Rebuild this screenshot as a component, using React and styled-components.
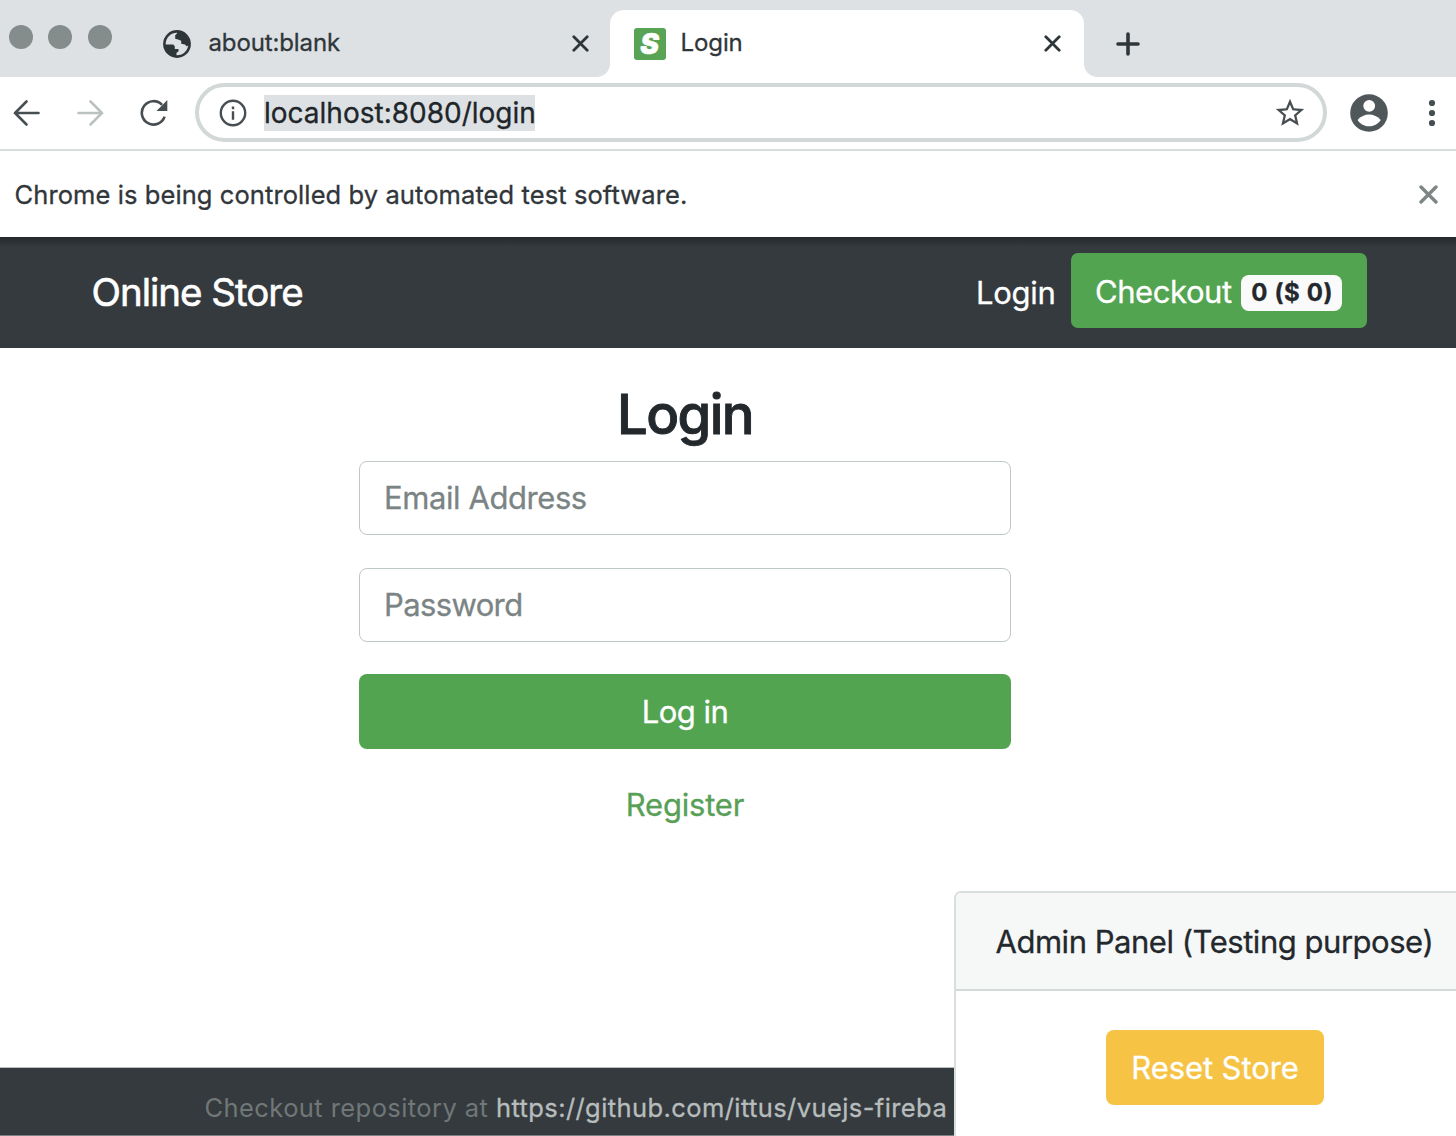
import React from "react";
import styled, { createGlobalStyle } from "styled-components";
import { MdStarBorder } from "react-icons/md";

const GlobalStyle = createGlobalStyle`
  *, *::before, *::after { box-sizing: border-box; }
  body {
    margin: 0;
    background: #fff;
    color: #23282d;
    font-family: Inter, "Liberation Sans", sans-serif;
    -webkit-text-stroke: 0.3px currentColor;
    overflow: hidden;
  }
`;

const Window = styled.div`
  position: relative;
  display: flex;
  flex-direction: column;
  width: 1456px;
  height: 1136px;
  overflow: hidden;
  background: #fff;
`;

const Icon = styled.svg`
  display: block;
  flex: none;
  fill: none;
  stroke: currentColor;
  stroke-width: ${(p) => p.$weight || 2.6};
  stroke-linecap: ${(p) => p.$cap || "butt"};
`;

/* Browser tab strip */

const TabStrip = styled.header`
  display: flex;
  align-items: flex-end;
  height: 77px;
  background: #dde1e3;
  color: #2f363a;
`;

const TrafficLights = styled.div`
  display: flex;
  gap: 15.5px;
  align-self: flex-start;
  padding: 25px 0 0 8.5px;
  width: 136px;
`;

const Light = styled.span`
  width: 24px;
  height: 24px;
  border-radius: 50%;
  background: #848c8c;
`;

const Tab = styled.div`
  position: relative;
  display: flex;
  align-items: center;
  width: 474px;
  height: 67px;
  padding: 0 ${(p) => (p.$active ? 23 : 21)}px 0 ${(p) => (p.$active ? 23.5 : 27)}px;
  border-radius: 14px 14px 0 0;
  background: ${(p) => (p.$active ? "#fff" : "transparent")};

  &::before, &::after {
    content: "";
    display: ${(p) => (p.$active ? "block" : "none")};
    position: absolute;
    bottom: 0;
    width: 13px;
    height: 13px;
  }
  &::before {
    left: -13px;
    background: radial-gradient(circle at 0 0, transparent 12.5px, #fff 13.2px);
  }
  &::after {
    right: -13px;
    background: radial-gradient(circle at 100% 0, transparent 12.5px, #fff 13.2px);
  }
`;

const TabTitle = styled.span`
  flex: 1;
  margin: 0 0 1px ${(p) => p.$gap}px;
  font-size: 24px;
  line-height: 30px;
  letter-spacing: ${(p) => p.$tracking}px;
`;

const Favicon = styled.span`
  display: flex;
  align-items: center;
  justify-content: center;
  width: 32px;
  height: 32px;
  border-radius: 3px;
  background: #58a354;
  color: #fff;
  font-size: 28px;
  font-weight: 900;
  font-style: italic;
  line-height: 32px;
  -webkit-text-stroke: 0.6px #fff;
`;

const NewTab = styled.div`
  display: flex;
  align-items: center;
  height: 67px;
  padding-left: 32px;
`;

/* Toolbar */

const Toolbar = styled.div`
  display: flex;
  align-items: center;
  height: 74px;
  padding: 0 0 1px 12px;
  border-bottom: 2px solid #d9dddd;
  color: #474e52;
`;

const NavIcons = styled.div`
  display: flex;
  gap: 36px;
  width: 183px;
`;

const Omnibox = styled.div`
  display: flex;
  align-items: center;
  width: 1132px;
  height: 59px;
  padding: 0 16px 0 20px;
  border: 4px solid #d2d7d7;
  border-radius: 30px;
`;

const Selection = styled.span`
  height: 36px;
  margin: 0 auto 0 17px;
  width: 271px;
  background: #dde1e3;
  color: #202529;
  font-size: 28px;
  line-height: 36px;
  white-space: nowrap;
`;

const ToolbarEnd = styled.div`
  display: flex;
  align-items: center;
  gap: 40px;
  padding-left: 23px;
`;

const InfoBar = styled.div`
  display: flex;
  align-items: center;
  justify-content: space-between;
  height: 86px;
  padding: 0 18px 0 14.5px;
  color: #7d8585;
`;

const InfoText = styled.span`
  color: #30363a;
  font-size: 25.5px;
  letter-spacing: 0.09px;
`;

/* Store page */

const NavBar = styled.nav`
  display: flex;
  align-items: center;
  height: 111px;
  padding: 0 89px 0 91.5px;
  background: linear-gradient(#23282d 0, #2a3034 4px, #353a3e 10px);
  color: #fff;
`;

const Brand = styled.a`
  margin: 0 auto 1px 0;
  font-size: 38.5px;
  letter-spacing: -1px;
  -webkit-text-stroke-width: 0.6px;
`;

const NavLink = styled.a`
  margin-right: 15px;
  font-size: 31px;
  letter-spacing: -0.3px;
`;

const CheckoutButton = styled.button`
  display: flex;
  align-items: center;
  width: 296.5px;
  height: 75px;
  margin-bottom: 4px;
  padding: 1px 0 0 24.5px;
  border: 0;
  border-radius: 7px;
  background: #53a451;
  color: #fff;
  font: 400 31px Inter, sans-serif;
  letter-spacing: -0.43px;
`;

const Badge = styled.span`
  height: 36px;
  width: 101px;
  margin: 3px 0 0 9px;
  padding-left: 2px;
  border-radius: 8px;
  background: #fafafa;
  color: #23282d;
  font-size: 24px;
  font-weight: 700;
  line-height: 36px;
  letter-spacing: 0.6px;
  text-align: center;
`;

const Main = styled.main`
  flex: none;
  height: 719px;
  padding: 33px 0 0 359px;
`;

const LoginForm = styled.div`
  display: flex;
  flex-direction: column;
  width: 652px;
  text-align: center;
`;

const Heading = styled.h3`
  margin: 0 0 14px;
  font-size: 54.5px;
  font-weight: 500;
  line-height: 66px;
  letter-spacing: -1.6px;
  -webkit-text-stroke-width: 0.9px;
`;

const Field = styled.input`
  width: 100%;
  height: 74px;
  margin-bottom: ${(p) => p.$gap}px;
  padding: 0 24px 1px 24px;
  border: 1.5px solid #c0c7c7;
  border-radius: 8px;
  outline: 0;
  background: #fff;
  font: 400 31px Inter, sans-serif;
  letter-spacing: ${(p) => p.$tracking}px;

  &::placeholder {
    color: #7b8484;
    opacity: 1;
    -webkit-text-stroke: 0.3px #7b8484;
  }
`;

const SubmitButton = styled.button`
  height: 75px;
  border: 0;
  border-radius: 8px;
  background: #53a451;
  color: #fff;
  font: 400 31px Inter, sans-serif;
  letter-spacing: -0.5px;
`;

const RegisterLink = styled.a`
  margin-top: 36px;
  color: #58a056;
  font-size: 31px;
  line-height: 40px;
  letter-spacing: -0.2px;
`;

const Footer = styled.footer`
  display: flex;
  align-items: center;
  height: 69px;
  padding: 12px 0 0 204.5px;
  border-top: 1px solid #b9bebe;
  border-bottom: 1px solid #7b8082;
  background: #353a3e;
  color: #707777;
  font-size: 25.5px;
  letter-spacing: 0.42px;
  white-space: pre;
  -webkit-text-stroke-width: 0;
`;

const RepoLink = styled.a`
  color: #b7bdbd;
  letter-spacing: 0.41px;
  -webkit-text-stroke: 0.3px #b7bdbd;
`;

/* The panel floats over the page and footer */
const AdminPanel = styled.aside`
  position: absolute;
  top: 891px;
  left: 954px;
  width: 504px;
  height: 247px;
  border: 2px solid #d9dede;
  border-radius: 7px 0 0 0;
  background: #fff;
`;

const PanelHeader = styled.div`
  height: 98px;
  padding-left: 39.5px;
  border-bottom: 2px solid #d4d9d9;
  border-radius: 5px 0 0 0;
  background: #f6f7f7;
  font-size: 31px;
  line-height: 98px;
  letter-spacing: -0.47px;
  white-space: nowrap;
`;

const PanelBody = styled.div`
  padding: 39px 0 0 150px;
`;

const ResetButton = styled.button`
  width: 218px;
  height: 75px;
  padding: 0;
  border: 0;
  border-radius: 8px;
  background: #f6c344;
  color: #fff;
  font: 400 31px Inter, sans-serif;
  letter-spacing: -0.1px;
`;

const Cross = ({ size = 17, weight = 2.8 }) => (
  <Icon width={size} height={size} viewBox="0 0 17 17" $weight={weight} $cap="round">
    <path d="M1.8 1.8L15.2 15.2M15.2 1.8L1.8 15.2" />
  </Icon>
);

const Globe = () => (
  <Icon width="28" height="28" viewBox="0 0 28 28" $weight="2.6">
    <circle cx="14" cy="14" r="12.6" />
    <path
      d="M14 1.5V3.5L12.2 5.3V8.8L15 9.5L18.2 10.7V13.8L22 14.4L23.5 16.2L26.5 15C27 8 21 1.5 14 1.5ZM1.5 14.5H10.2L11.8 16.2V19H15.5V21.5L13.5 22.8V26.5C7 26.5 1.5 21 1.5 14.5Z"
      fill="currentColor"
      stroke="none"
    />
  </Icon>
);

const BackArrow = () => (
  <Icon width="28" height="28" viewBox="0 0 28 28" $cap="round">
    <path d="M26.5 14H3M14.5 2.5L3 14L14.5 25.5" />
  </Icon>
);

const ForwardArrow = () => (
  <Icon width="28" height="28" viewBox="0 0 28 28" $cap="round" color="#bac2c0">
    <path d="M2.5 14H26M14.5 2.5L26 14L14.5 25.5" />
  </Icon>
);

const Reload = () => (
  <Icon width="28" height="28" viewBox="0 0 28 28">
    <path d="M24.6 17.6A11.7 11.7 0 1 1 22 5.8" />
    <path d="M27.3 1V12H16.5Z" fill="currentColor" stroke="none" />
  </Icon>
);

const Info = () => (
  <Icon width="28" height="28" viewBox="0 0 28 28" $weight="2.4">
    <circle cx="14" cy="14" r="12.2" />
    <path d="M14 7.5V10.2M14 12.2V20.8" />
  </Icon>
);

const Profile = () => (
  <svg width="38" height="38" viewBox="0 0 38 38">
    <circle cx="19" cy="19" r="18.8" fill="#50575a" />
    <circle cx="19.2" cy="11.8" r="5.9" fill="#fff" />
    <path d="M7.6 26C10.5 22.5 15 20.6 19.1 20.6S27.8 22.5 30.7 26C28 30 23.8 32.3 19.1 32.3S10.2 30 7.6 26Z" fill="#fff" />
  </svg>
);

const Menu = () => (
  <svg width="8" height="28" viewBox="0 0 8 28" fill="currentColor">
    <circle cx="4" cy="4" r="3.1" />
    <circle cx="4" cy="14" r="3.1" />
    <circle cx="4" cy="24" r="3.1" />
  </svg>
);

const Plus = () => (
  <Icon width="24" height="24" viewBox="0 0 24 24" $weight="3.6" $cap="round">
    <path d="M12 2V22M2 12H22" />
  </Icon>
);

export default function App() {
  return (
    <Window>
      <GlobalStyle />
      <TabStrip>
        <TrafficLights>
          <Light />
          <Light />
          <Light />
        </TrafficLights>
        <Tab>
          <Globe />
          <TabTitle $gap={17.5} $tracking={-0.12}>about:blank</TabTitle>
          <Cross />
        </Tab>
        <Tab $active>
          <Favicon>S</Favicon>
          <TabTitle $gap={15} $tracking={-0.1}>Login</TabTitle>
          <Cross />
        </Tab>
        <NewTab>
          <Plus />
        </NewTab>
      </TabStrip>
      <Toolbar>
        <NavIcons>
          <BackArrow />
          <ForwardArrow />
          <Reload />
        </NavIcons>
        <Omnibox>
          <Info />
          <Selection>localhost:8080/login</Selection>
          <MdStarBorder size={34} />
        </Omnibox>
        <ToolbarEnd>
          <Profile />
          <Menu />
        </ToolbarEnd>
      </Toolbar>
      <InfoBar>
        <InfoText>Chrome is being controlled by automated test software.</InfoText>
        <Cross size={19} weight={3} />
      </InfoBar>
      <NavBar>
        <Brand>Online Store</Brand>
        <NavLink>Login</NavLink>
        <CheckoutButton>
          Checkout
          <Badge>0 ($ 0)</Badge>
        </CheckoutButton>
      </NavBar>
      <Main>
        <LoginForm>
          <Heading>Login</Heading>
          <Field placeholder="Email Address" $gap={33} $tracking={-0.42} />
          <Field type="password" placeholder="Password" $gap={32} $tracking={-0.62} />
          <SubmitButton>Log in</SubmitButton>
          <RegisterLink>Register</RegisterLink>
        </LoginForm>
      </Main>
      <Footer>
        Checkout repository at <RepoLink>https://github.com/ittus/vuejs-fireba</RepoLink>
      </Footer>
      <AdminPanel>
        <PanelHeader>Admin Panel (Testing purpose)</PanelHeader>
        <PanelBody>
          <ResetButton>Reset Store</ResetButton>
        </PanelBody>
      </AdminPanel>
    </Window>
  );
}
